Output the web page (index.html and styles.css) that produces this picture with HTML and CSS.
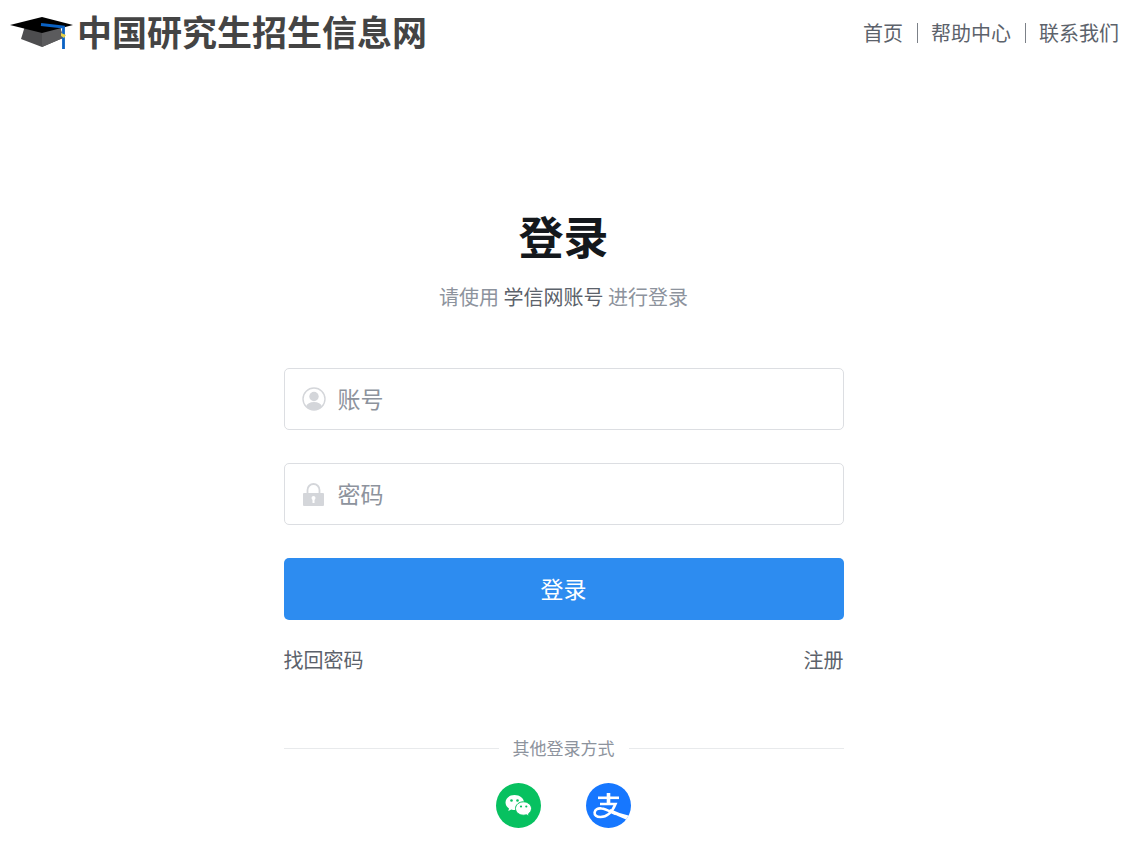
FILE: index.html
```html
<!DOCTYPE html>
<html lang="zh-CN">
<head>
    <meta charset="UTF-8">
    <meta name="viewport" content="width=device-width, initial-scale=1.0">
    <title>中国研究生招生信息网</title>
    <link rel="stylesheet" href="styles.css">
</head>
<body>
    <header class="header">
        <a class="logo" href="#">
            <svg class="logo-icon" viewBox="0 0 64 34" aria-hidden="true">
                <path d="M15 10 L11 23 L32 31 L53 22 L50 10 Z" fill="#4d4d4f"/>
                <path d="M32 15 L32 31 L53 22 L50 10 Z" fill="#5b5b5d"/>
                <path d="M0 9 L32 1 L63 9 L32 17 Z" fill="#000"/>
                <path d="M31 8.500 L53.500 11 V33" fill="none" stroke="#0a62c4" stroke-width="2.800"/>
                <path d="M51 17 L56 19 L54 22 L51 20 Z" fill="#e6d047"/>
            </svg>
            <span>中国研究生招生信息网</span>
        </a>
        <nav class="nav">
            <a href="#">首页</a>
            <a href="#">帮助中心</a>
            <a href="#">联系我们</a>
        </nav>
    </header>

    <main class="main">
        <form class="login">
            <h1>登录</h1>
            <p class="tip">请使用 <span>学信网账号</span> 进行登录</p>

            <div class="field">
                <label for="username" aria-label="账号">
                    <svg viewBox="0 0 24 24">
                        <circle cx="12" cy="12" r="11" fill="none" stroke="#d4d6da" stroke-width="1.4"/>
                        <circle cx="12" cy="9.5" r="4.7" fill="#d4d6da"/>
                        <path d="M4 19.500 C5 16.5 8 15 12 15 S19 16.5 20 19.500 A11 11 0 0 1 4 19.500 Z" fill="#d4d6da"/>
                    </svg>
                </label>
                <input type="text" id="username" placeholder="账号">
            </div>

            <div class="field">
                <label for="password" aria-label="密码">
                    <svg viewBox="0 0 24 24">
                        <path d="M5.500 12 V8 A6 6 0 0 1 17.500 8 V12" fill="none" stroke="#d4d6da" stroke-width="1.800"/>
                        <rect x="1" y="11" width="21" height="13" rx="1" fill="#d4d6da"/>
                        <circle cx="11.500" cy="16" r="2" fill="#fff"/>
                        <rect x="10.500" y="16" width="2" height="5" fill="#fff"/>
                    </svg>
                </label>
                <input type="password" id="password" placeholder="密码">
            </div>

            <button type="submit" class="submit">登录</button>

            <div class="links">
                <a href="#">找回密码</a>
                <a href="#">注册</a>
            </div>

            <div class="other">其他登录方式</div>
            <div class="social">
                <a href="#" aria-label="微信登录">
                    <svg viewBox="0 0 45 45">
                        <circle cx="22.5" cy="22.500" r="22.5" fill="#07c160"/>
                        <path d="M18.500 12 C13.300 12 9.500 15.300 9.500 19.500 C9.500 22 10.900 24.100 13 25.500 L12.300 28 L15.400 26.500 Q17 27 18.800 27 C24 27 28 23.700 28 19.500 C28 15.300 23.800 12 18.500 12 Z" fill="#fff"/>
                        <path d="M27.500 18.800 C23 18.800 19.500 21.800 19.500 25.500 C19.500 29.300 23 32.200 27.500 32.200 Q29 32.200 30.500 31.800 L33.200 33.200 L32.500 30.800 C34.300 29.500 35.500 27.700 35.500 25.500 C35.500 21.800 32 18.800 27.500 18.800 Z" fill="#fff" stroke="#07c160" stroke-width="1"/>
                        <circle cx="15.500" cy="17.500" r="1.300" fill="#07c160"/>
                        <circle cx="21.500" cy="17.500" r="1.300" fill="#07c160"/>
                        <circle cx="25" cy="23.500" r="1.100" fill="#07c160"/>
                        <circle cx="30.300" cy="23.500" r="1.100" fill="#07c160"/>
                    </svg>
                </a>
                <a href="#" aria-label="支付宝登录">
                    <svg viewBox="0 0 45 45">
                        <circle cx="22.500" cy="22.500" r="22.500" fill="#1677ff"/>
                        <g fill="none" stroke="#fff" stroke-width="2.600">
                            <path d="M12 14.800 H33"/>
                            <path d="M22.500 10 V21" stroke-width="3.600"/>
                            <path d="M14 21 H29.500 C27 27 22 34 14.500 34 C10.500 34 8.300 32 8.600 29.500 C9 26.500 12 25 15.500 25.500 C20 26 25 29 30 31"/>
                        </g>
                        <path d="M24 26 Q32 30 42.500 32.500 Q41.500 34.800 40 36.500 Q32 33.500 23 28.500 Z" fill="#fff"/>
                    </svg>
                </a>
            </div>
        </form>
    </main>
</body>
</html>
```
FILE: styles.css
```css
* {
    box-sizing: border-box;
}
body {
    margin: 0;
    background-color: #fff;
    color: #5c626b;
    font-family: "Noto Sans CJK SC", sans-serif;
    font-size: 20px;
    line-height: 30px;
}
a {
    color: inherit;
    text-decoration: none;
}
svg {
    display: block;
}
.header {
    display: flex;
    justify-content: space-between;
    align-items: center;
    height: 66px;
    padding: 0 2px 0 10px;
}
.logo {
    display: flex;
    align-items: center;
    gap: 3px;
    color: #444;
    font-size: 35px;
    font-weight: 700;
    white-space: nowrap;
}
.logo span {
    padding-bottom: 4px;
}
.logo-icon {
    width: 64px;
    height: 34px;
}
.nav {
    display: flex;
    align-items: center;
    white-space: nowrap;
}
.nav a + a {
    display: flex;
    align-items: center;
}
.nav a + a::before {
    content: "";
    width: 1px;
    height: 20px;
    margin: 0 13px 0 14px;
    background-color: #7c8188;
}
.main {
    padding: 140px 0 28px 6px;
}
.login {
    max-width: 560px;
    margin: 0 auto;
}
h1 {
    margin: 0 0 16px;
    color: #14181c;
    font-size: 45px;
    line-height: 60px;
    text-align: center;
}
.tip {
    margin: 0 0 56px;
    color: #8d939d;
    text-align: center;
}
.tip span {
    color: #5c626b;
}
.field {
    display: flex;
    align-items: center;
    gap: 12px;
    height: 62px;
    margin-bottom: 33px;
    padding: 0 17px;
    border: 1px solid #dcdee2;
    border-radius: 5px;
}
.field svg {
    width: 24px;
    height: 24px;
}
.field input {
    flex: 1;
    min-width: 0;
    height: 58px;
    padding: 0 0 3px;
    border: none;
    outline: none;
    background: none;
    color: #14181c;
    font-family: inherit;
    font-size: 23px;
}
.field input::placeholder {
    color: #8d939d;
    opacity: 1;
}
.submit {
    display: block;
    width: 100%;
    height: 62px;
    padding: 0 0 3px;
    border: none;
    border-radius: 5px;
    background-color: #2d8cf0;
    color: #fff;
    font-family: inherit;
    font-size: 23px;
    cursor: pointer;
}
.submit:hover {
    background-color: #57a3f3;
}
.links {
    display: flex;
    justify-content: space-between;
    margin: 25px 0 58px;
}
.other {
    display: flex;
    align-items: center;
    gap: 14px;
    margin-bottom: 20px;
    color: #8d939d;
    font-size: 17px;
}
.other::before,
.other::after {
    content: "";
    flex: 1;
    height: 1px;
    background-color: #e8eaec;
}
.social {
    display: flex;
    justify-content: center;
    gap: 45px;
}
.social svg {
    width: 45px;
    height: 45px;
}
```
